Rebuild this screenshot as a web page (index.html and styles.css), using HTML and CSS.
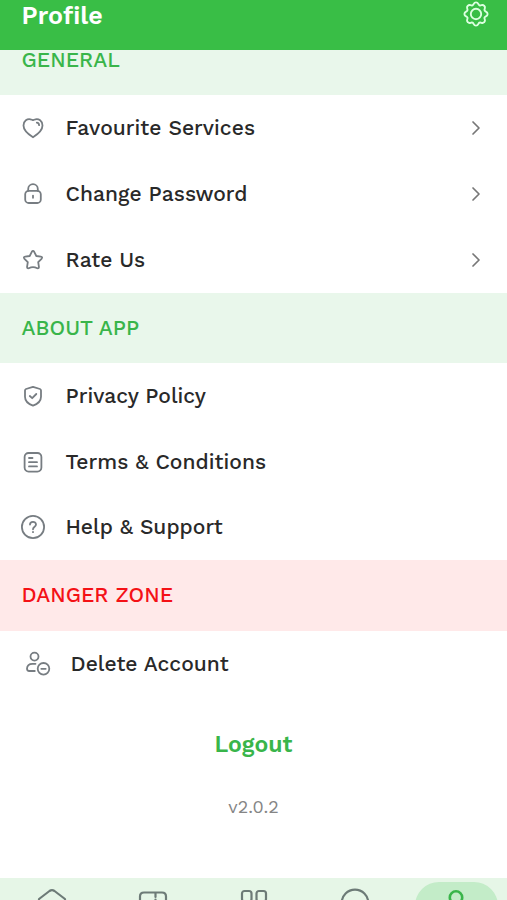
FILE: index.html
```html
<!DOCTYPE html>
<html lang="en">
<head>
<meta charset="utf-8">
<title>Profile</title>
<link rel="stylesheet" href="styles.css">
</head>
<body>
<div class="app">
  <header class="header">
    <h1>Profile</h1>
    <svg class="gear" viewBox="0 0 26 26"><path d="M13 1.4C15.8 1.4 15 4.2 16.8 4.5C18.5 4.9 19.3 2.8 21.2 4.8C23.2 6.7 21.1 7.5 21.5 9.2C21.8 11 24.6 10.2 24.6 13C24.6 15.8 21.8 15 21.5 16.8C21.1 18.5 23.2 19.3 21.2 21.2C19.3 23.2 18.5 21.1 16.8 21.5C15 21.8 15.8 24.6 13 24.6C10.2 24.6 11 21.8 9.2 21.5C7.5 21.1 6.7 23.2 4.8 21.2C2.8 19.3 4.9 18.5 4.5 16.8C4.2 15 1.4 15.8 1.4 13C1.4 10.2 4.2 11 4.5 9.2C4.9 7.5 2.8 6.7 4.8 4.8C6.7 2.8 7.5 4.9 9.2 4.5C11 4.2 10.2 1.4 13 1.4Z"/><circle cx="13" cy="13" r="5.2"/></svg>
  </header>
  <main>
    <h2 class="section first">GENERAL</h2>
    <div class="rows">
      <div class="row">
        <svg class="icon" viewBox="0 0 26 26"><path d="M13 22.3C10.5 20.7 3.5 16.5 3.5 10.6C3.5 5.5 7.5 3.7 10.4 4.3Q12 4.6 13 5.2Q14 4.6 15.6 4.3C18.5 3.7 22.5 5.5 22.5 10.6C22.5 16.5 15.5 20.7 13 22.3Z"/><path d="M16.8 7.7Q19 8 19.1 10.2"/></svg>
        <span class="label">Favourite Services</span>
        <svg class="chevron" viewBox="0 0 10 16"><path d="M2 2L8 8L2 14"/></svg>
      </div>
      <div class="row">
        <svg class="icon" viewBox="0 0 26 26"><rect x="5.2" y="9.8" width="15.6" height="12.2" rx="3.5"/><path d="M8.2 9.8V8a4.8 4.8 0 0 1 9.6 0V9.8M13 14.6v2.2"/></svg>
        <span class="label">Change Password</span>
        <svg class="chevron" viewBox="0 0 10 16"><path d="M2 2L8 8L2 14"/></svg>
      </div>
      <div class="row">
        <svg class="icon" viewBox="0 0 26 26"><path d="M11.8 4.8Q13 2.8 14.2 4.8L16.3 9L20.8 9.6Q23 10 21.5 11.8L18.2 15.2L18.9 19.6Q19.1 21.7 17.2 21.2Q13 19 8.8 21.2Q6.9 21.7 7.1 19.6L7.8 15.2L4.5 11.8Q3 10 5.2 9.6L9.7 9Z"/></svg>
        <span class="label">Rate Us</span>
        <svg class="chevron" viewBox="0 0 10 16"><path d="M2 2L8 8L2 14"/></svg>
      </div>
    </div>
    <h2 class="section">ABOUT APP</h2>
    <div class="rows about">
      <div class="row">
        <svg class="icon" viewBox="0 0 26 26"><path d="M13 3.8L20 6Q21 6.4 21 7.5V13.7C21 18.2 17 21.2 13 22.7C9 21.2 5 18.2 5 13.7V7.5Q5 6.4 6 6Z"/><path d="M9.8 13L12.2 15.2L16.3 11"/></svg>
        <span class="label">Privacy Policy</span>
      </div>
      <div class="row">
        <svg class="icon" viewBox="0 0 26 26"><rect x="4.6" y="4" width="16.8" height="18.6" rx="4"/><path d="M9 9h3.5M9 13.2h8M9 17.4h8"/></svg>
        <span class="label">Terms &amp; Conditions</span>
      </div>
      <div class="row">
        <svg class="icon" viewBox="0 0 26 26"><circle cx="13" cy="13" r="11.1"/><path d="M10 10.6C10 7 16 7 16 10.5C16 12.9 13 12.6 13 15.3M13 17.8v.4"/></svg>
        <span class="label">Help &amp; Support</span>
      </div>
    </div>
    <h2 class="section danger">DANGER ZONE</h2>
    <div class="row delete">
      <svg class="icon" viewBox="0 0 26 26"><circle cx="9.5" cy="5.6" r="4"/><path d="M9.8 20H4.2Q2 20 2 17.5Q2.2 12.8 7.5 12.8H10.5"/><circle cx="18.5" cy="17.8" r="5.8"/><path d="M16.3 17.8h4.4"/></svg>
      <span class="label">Delete Account</span>
    </div>
    <div class="logout">Logout</div>
    <div class="version">v2.0.2</div>
  </main>
  <nav class="nav">
    <span class="tab"><svg viewBox="0 0 32 32"><path d="M3 12L13.5 4Q16 2.2 18.5 4L29 12V28H3Z"/></svg></span>
    <span class="tab"><svg viewBox="0 0 32 32"><path d="M3 28V9.5Q3 5.5 7 5.5H25Q29 5.5 29 9.5V28M18.5 6v4M18.5 12.5v3"/></svg></span>
    <span class="tab"><svg viewBox="0 0 32 32"><rect x="4" y="4" width="9.5" height="10.5" rx="2.5"/><rect x="18.5" y="4" width="9.5" height="10.5" rx="2.5"/></svg></span>
    <span class="tab"><svg viewBox="0 0 32 32"><circle cx="16" cy="16" r="13.3"/></svg></span>
    <span class="tab active"><svg viewBox="0 0 32 32"><circle cx="16" cy="10.5" r="6.2"/></svg></span>
  </nav>
</div>
</body>
</html>
```

FILE: styles.css
```css
* { box-sizing: border-box; }
body { margin: 0; background: #fff; font-family: "Work Sans", "Open Sans", sans-serif; letter-spacing: .05px; }
.app { width: 507px; height: 900px; overflow: hidden; display: flex; flex-direction: column; }
h1, h2 { margin: 0; }
svg { display: block; fill: none; stroke-linecap: round; stroke-linejoin: round; flex: none; }
.header { height: 50px; padding: 0 18px 0 21.5px; display: flex; justify-content: space-between; align-items: flex-start; background: #39be46; color: #fff; }
h1 { font-size: 25px; line-height: 31px; font-weight: 600; }
.gear { width: 26px; height: 26px; margin-top: 1px; stroke: #dcffe0; stroke-width: 1.9; }
main { flex: 1; }
.section { height: 70px; padding-left: 21.5px; display: flex; align-items: center; background: #e9f7eb; color: #39b54a; font-size: 21px; line-height: 28px; font-weight: 500; }
.section.first { height: 45px; padding-bottom: 25px; }
.section.danger { height: 71px; padding-bottom: 1px; background: #ffe9e9; color: #f41116; }
.rows { height: 198px; display: flex; flex-direction: column; }
.rows.about { height: 197px; }
.row { flex: 1; padding: 0 26px 0 20px; display: flex; align-items: center; }
.icon { width: 26px; height: 26px; margin-right: 19.5px; stroke: #777d82; stroke-width: 1.8; }
.label { flex: 1; white-space: nowrap; color: #292929; font-size: 21px; line-height: 28px; font-weight: 500; }
.chevron { width: 10px; height: 16px; stroke: #777; stroke-width: 1.7; }
.delete { height: 66px; padding-left: 25px; padding-bottom: 0; }
.logout { height: 94px; display: flex; align-items: center; justify-content: center; color: #39b54a; font-size: 23px; font-weight: 600; }
.version { height: 30px; display: flex; align-items: center; justify-content: center; color: #858585; font-size: 18px; }
.nav { height: 22px; flex: none; display: flex; justify-content: space-between; padding: 4px 9.5px 0 10px; background: #e6f6e7; }
.tab { width: 83px; height: 48px; padding-top: 5px; display: flex; justify-content: center; border-radius: 24px; }
.tab svg { width: 32px; height: 32px; stroke: #6d7b77; stroke-width: 2.2; }
.tab.active { background: #c3ecc8; }
.tab.active svg { stroke: #39b54a; stroke-width: 2.6; }
```
